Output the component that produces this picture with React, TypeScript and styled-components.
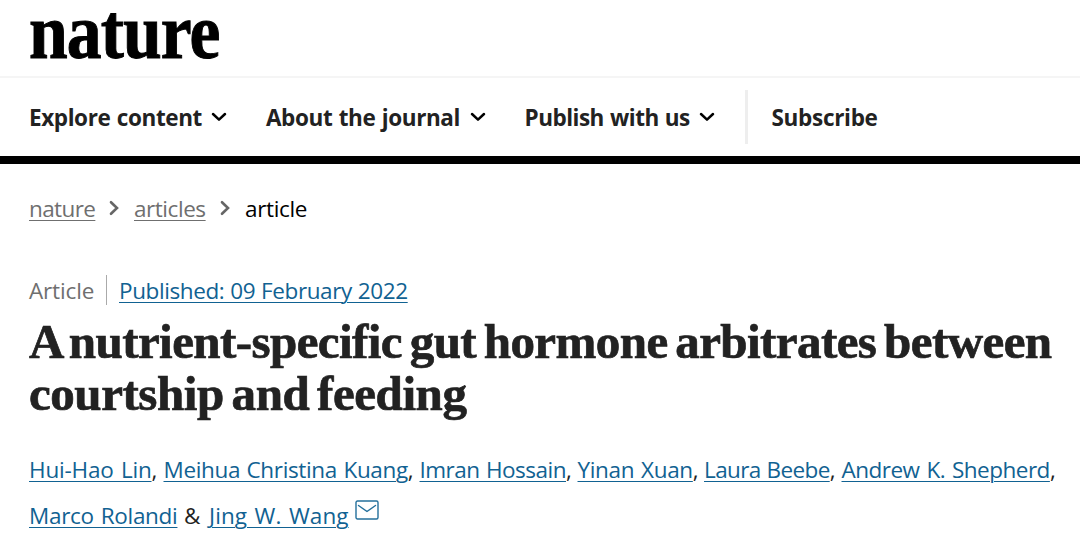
import styled, { createGlobalStyle } from "styled-components";

const GlobalStyle = createGlobalStyle`
  * {
    box-sizing: border-box;
  }

  body {
    margin: 0;
    background: #fff;
    color: #222;
    font-family: "Open Sans", "Noto Sans", sans-serif;
    font-size: 22.5px;
    overflow: hidden;
  }
`;

const Page = styled.div`
  height: 544px;
`;

const Brand = styled.header`
  display: flex;
  align-items: flex-start;
  height: 78px;
  padding-left: 29px;
  border-bottom: 2px solid #f5f5f5;
`;

const Logo = styled.div`
  color: #000;
  font-family: "Liberation Serif", serif;
  font-size: 78px;
  font-weight: 700;
  line-height: 64px;
  letter-spacing: -1px;
  transform: scaleX(0.892);
  transform-origin: left;
  -webkit-text-stroke: 1px #000;
`;

const Nav = styled.nav`
  display: flex;
  align-items: center;
  height: 86px;
  border-bottom: 8px solid #000;
  padding-left: 29px;
`;

const MenuItem = styled.div<{ $width: number }>`
  display: flex;
  align-items: center;
  justify-content: space-between;
  width: ${(props) => props.$width}px;
  margin-right: 39px;
`;

const Label = styled.span<{ $spacing: number; $words?: number }>`
  font-weight: 700;
  letter-spacing: ${(props) => props.$spacing}px;
  word-spacing: ${(props) => props.$words ?? 0}px;
  white-space: nowrap;
`;

const Divider = styled.div`
  width: 3px;
  height: 54px;
  margin: 0 24px 0 -9px;
  background: #eee;
`;

const Breadcrumbs = styled.div`
  display: flex;
  align-items: center;
  height: 32px;
  margin: 28px 0 0 29px;
  color: #000;
`;

const Crumb = styled.div<{ $width: number }>`
  display: flex;
  align-items: center;
  width: ${(props) => props.$width}px;
  gap: 14px;
  white-space: nowrap;
`;

const Link = styled.a<{ $spacing?: number; $words?: number; $muted?: boolean }>`
  color: ${(props) => (props.$muted ? "#6f6f6f" : "#116292")};
  letter-spacing: ${(props) => props.$spacing ?? 0}px;
  word-spacing: ${(props) => props.$words ?? 0}px;
  text-decoration: underline;
  text-decoration-thickness: 1px;
  text-underline-offset: 3px;
`;

const Plain = styled.span<{ $spacing: number }>`
  letter-spacing: ${(props) => props.$spacing}px;
`;

const Meta = styled.div`
  display: flex;
  align-items: center;
  height: 32px;
  margin: 50px 0 0 29px;
`;

const Kind = styled.span`
  width: 78px;
  height: 30px;
  margin-right: 12px;
  border-right: 1px solid #aaa;
  color: #6f6f6f;
  line-height: 31px;
  letter-spacing: -0.15px;
`;

const Title = styled.h1`
  margin: 10px 0 0 29px;
  font-family: "Liberation Serif", serif;
  font-size: 49px;
  font-weight: 700;
  line-height: 52px;
  white-space: nowrap;
  -webkit-text-stroke: 0.7px #222;
`;

const TitleLine = styled.span<{ $spacing: number }>`
  display: block;
  letter-spacing: ${(props) => props.$spacing}px;
  word-spacing: -4px;
`;

const Authors = styled.div`
  margin: 27px 0 0 29px;
`;

const AuthorRow = styled.div`
  display: flex;
  height: 46px;
  line-height: 46px;
  white-space: nowrap;
`;

const Author = styled.span<{ $width: number }>`
  width: ${(props) => props.$width}px;
`;

const Mail = styled.svg`
  margin-top: 7px;
`;

const menu = [
  { label: "Explore content", width: 198, spacing: -0.4, words: 1 },
  { label: "About the journal", width: 219.5, spacing: -0.4, words: 1 },
  { label: "Publish with us", width: 190, spacing: -0.5, words: 0.8 },
];

const crumbs = [
  { label: "nature", width: 105, spacing: -0.6 },
  { label: "articles", width: 111, spacing: -0.45 },
];

const authors = [
  { name: "Hui-Hao Lin", width: 134.5, spacing: -0.2, words: 1.7 },
  { name: "Meihua Christina Kuang", width: 256, spacing: -0.35, words: 1 },
  { name: "Imran Hossain", width: 158, spacing: -0.5, words: 1 },
  { name: "Yinan Xuan", width: 126.5, spacing: -0.35, words: 1.5 },
  { name: "Laura Beebe", width: 137.5, spacing: -0.6, words: 0.5 },
  { name: "Andrew K. Shepherd", width: 216, spacing: -0.5, words: 1.5 },
];

const ChevronDown = () => (
  <svg width="16" height="10" viewBox="0 0 16 10" fill="none">
    <path d="M2 2L8 7.6L14 2" stroke="#000" strokeWidth="2.5" strokeLinecap="round" strokeLinejoin="round" />
  </svg>
);

const ChevronRight = () => (
  <svg width="10" height="16" viewBox="0 0 10 16" fill="none">
    <path d="M2 2.2L8 8L2 13.8" stroke="#666" strokeWidth="2.6" strokeLinecap="round" />
  </svg>
);

export default function App() {
  return (
    <Page>
      <GlobalStyle />
      <Brand>
        <Logo>nature</Logo>
      </Brand>
      <Nav>
        {menu.map((item) => (
          <MenuItem key={item.label} $width={item.width}>
            <Label $spacing={item.spacing} $words={item.words}>
              {item.label}
            </Label>
            <ChevronDown />
          </MenuItem>
        ))}
        <Divider />
        <Label $spacing={-0.3}>Subscribe</Label>
      </Nav>

      <Breadcrumbs>
        {crumbs.map((crumb) => (
          <Crumb key={crumb.label} $width={crumb.width}>
            <Link $muted $spacing={crumb.spacing}>
              {crumb.label}
            </Link>
            <ChevronRight />
          </Crumb>
        ))}
        <Plain $spacing={-0.35}>article</Plain>
      </Breadcrumbs>

      <Meta>
        <Kind>Article</Kind>
        <Link $spacing={-0.4} $words={0.5}>
          Published: 09 February 2022
        </Link>
      </Meta>

      <Title>
        <TitleLine $spacing={-0.57}>A nutrient-specific gut hormone arbitrates between</TitleLine>
        <TitleLine $spacing={-0.44}>courtship and feeding</TitleLine>
      </Title>

      <Authors>
        <AuthorRow>
          {authors.map((author) => (
            <Author key={author.name} $width={author.width}>
              <Link $spacing={author.spacing} $words={author.words}>
                {author.name}
              </Link>
              ,
            </Author>
          ))}
        </AuthorRow>
        <AuthorRow>
          <Author $width={155}>
            <Link $spacing={-0.3} $words={1.4}>
              Marco Rolandi
            </Link>
          </Author>
          <Author $width={25}>&amp;</Author>
          <Author $width={145.5}>
            <Link $spacing={0.1} $words={1.5}>
              Jing W. Wang
            </Link>
          </Author>
          <Mail width="24" height="20" viewBox="0 0 24 20" fill="none" stroke="#24709c" strokeWidth="1.4">
            <rect x="1" y="1" width="22" height="18" rx="1.5" />
            <path d="M3.5 5.5L12 11.5L20.5 5.5" strokeLinecap="round" strokeLinejoin="round" />
          </Mail>
        </AuthorRow>
      </Authors>
    </Page>
  );
}
